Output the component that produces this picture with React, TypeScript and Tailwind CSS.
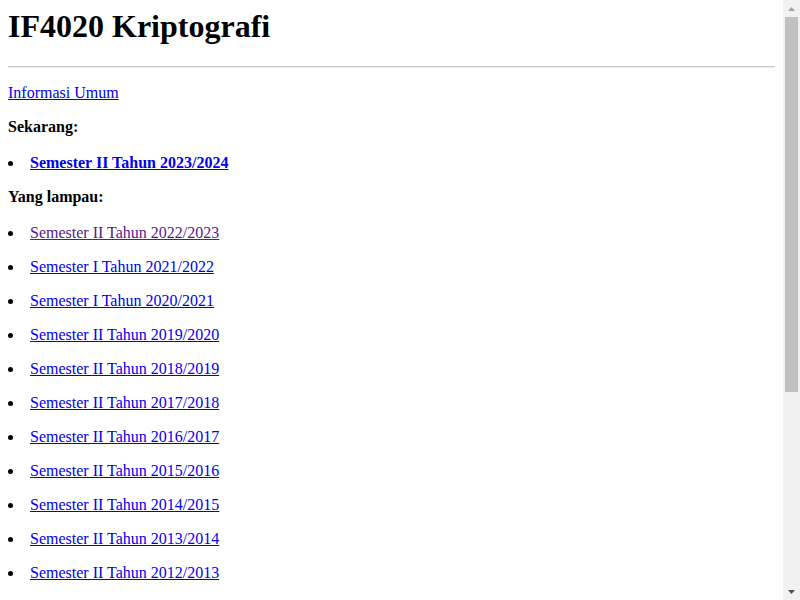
const sekarang = "Semester II Tahun 2023/2024";

const lampau = [
  { label: "Semester II Tahun 2022/2023", visited: true },
  { label: "Semester I Tahun 2021/2022" },
  { label: "Semester I Tahun 2020/2021" },
  { label: "Semester II Tahun 2019/2020" },
  { label: "Semester II Tahun 2018/2019" },
  { label: "Semester II Tahun 2017/2018" },
  { label: "Semester II Tahun 2016/2017" },
  { label: "Semester II Tahun 2015/2016" },
  { label: "Semester II Tahun 2014/2015" },
  { label: "Semester II Tahun 2013/2014" },
  { label: "Semester II Tahun 2012/2013" },
  { label: "Semester II Tahun 2011/2012" },
  { label: "Semester II Tahun 2010/2011" },
  { label: "Semester II Tahun 2009/2010" },
  { label: "Semester II Tahun 2008/2009" },
  { label: "Semester II Tahun 2007/2008" },
  { label: "Semester II Tahun 2006/2007" },
  { label: "Semester II Tahun 2005/2006" },
  { label: "Semester II Tahun 2004/2005" },
  { label: "Semester II Tahun 2003/2004" },
];

function Item({ children }: { children: React.ReactNode }) {
  return (
    <li>
      <p className="my-4 flex items-center">
        <span className="w-[22px] flex-none">
          <span className="block w-[5px] h-[5px] mt-[1px] rounded-full bg-black" />
        </span>
        {children}
      </p>
    </li>
  );
}

// browser scrollbar of the reference, drawn over the page
function Scrollbar() {
  return (
    <div className="fixed top-0 right-0 w-[17px] h-[600px] bg-[#f1f1f1] flex flex-col">
      <div className="h-[17px] flex items-center justify-center">
        <svg width="7" height="4" viewBox="0 0 7 4">
          <polygon points="0,4 3.5,0 7,4" fill="#a3a3a3" />
        </svg>
      </div>
      <div className="h-[375px] mx-[2px] bg-[#c1c1c1]" />
      <div className="flex-1" />
      <div className="h-[17px] flex items-center justify-center">
        <svg width="7" height="4" viewBox="0 0 7 4">
          <polygon points="0,0 7,0 3.5,4" fill="#505050" />
        </svg>
      </div>
    </div>
  );
}

export default function App() {
  return (
    <div className="bg-white">
      <div className="mr-[17px] px-2 pt-2 text-black text-base leading-[normal] font-['Liberation_Serif','Times_New_Roman',serif]">
        <h1 className="text-[32px] font-bold mb-[21.44px]">IF4020 Kriptografi</h1>
        <hr className="h-0 border-t border-b border-t-[#cbcbcb] border-b-[#ececec] mb-4" />
        <p className="my-4">
          <a href="#" className="text-[#0000ee] underline">Informasi Umum</a>
        </p>
        <p className="my-4 font-bold">Sekarang:</p>
        <ul className="mt-[18px]">
          <Item>
            <a href="#" className="text-[#0000ee] underline font-bold">{sekarang}</a>
          </Item>
        </ul>
        <p className="my-4 font-bold">Yang lampau:</p>
        <ul className="mt-[18px]">
          {lampau.map((s) => (
            <Item key={s.label}>
              <a href="#" className={s.visited ? "text-[#551a8b] underline" : "text-[#0000ee] underline"}>
                {s.label}
              </a>
            </Item>
          ))}
        </ul>
      </div>
      <Scrollbar />
    </div>
  );
}
